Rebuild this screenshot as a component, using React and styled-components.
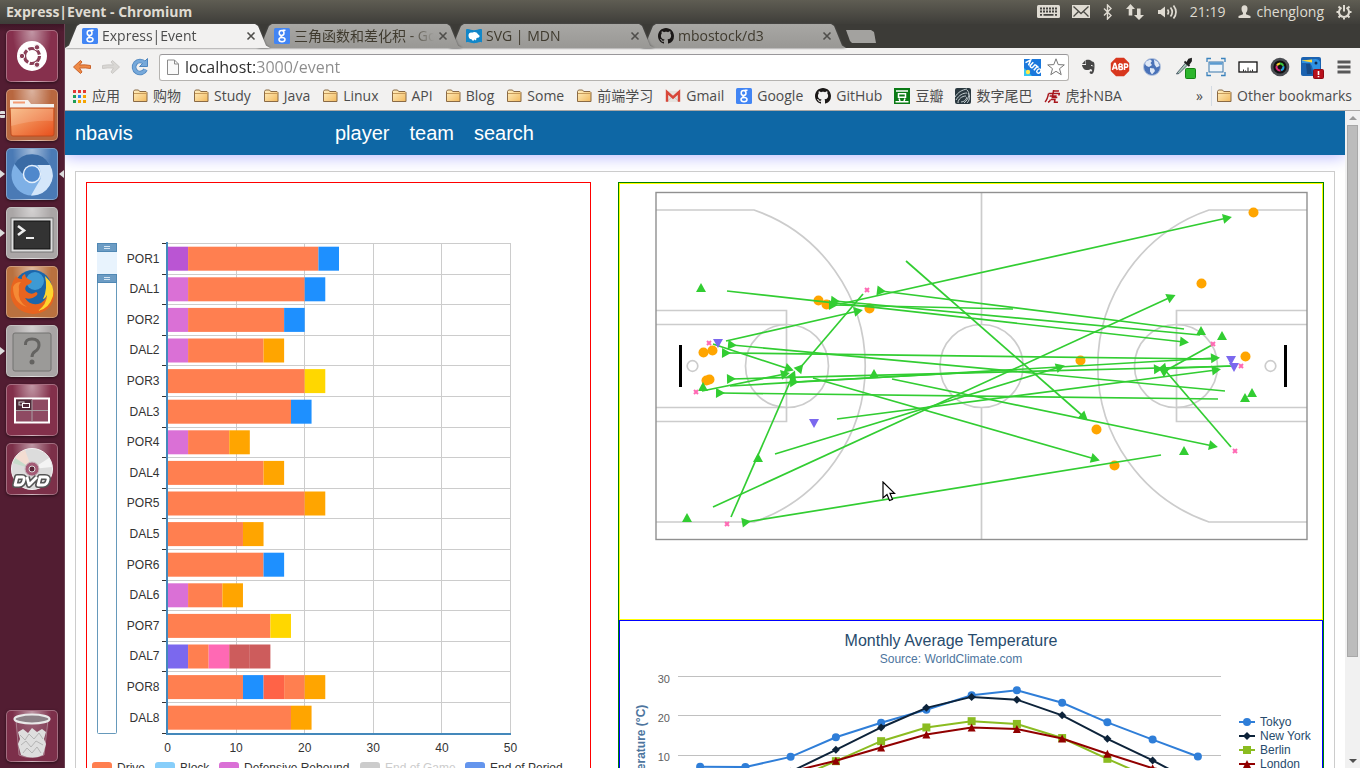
import React from "react";
import styled, { createGlobalStyle, css } from "styled-components";

const UI = `"Open Sans", "Noto Sans CJK SC", sans-serif`;
const WEB = `"Liberation Sans", Arial, "Noto Sans CJK SC", sans-serif`;

const Global = createGlobalStyle`
  *, *::before, *::after { box-sizing: border-box; }
  html, body { margin: 0; height: 100%; overflow: hidden; }
  body { background: #3c3b37; font-family: ${UI}; }
  button { font: inherit; color: inherit; border: 0; background: none; padding: 0; margin: 0; cursor: default; }
  a { color: inherit; text-decoration: none; }
  svg { display: block; flex: none; }
`;

/* ---------- desktop shell ---------- */

const Desktop = styled.div`
  display: flex;
  flex-direction: column;
  height: 100vh;
`;

const TopPanel = styled.header`
  display: flex;
  align-items: center;
  justify-content: space-between;
  flex: none;
  height: 24px;
  padding: 0 8px 0 6px;
  background: linear-gradient(#5f5d53, #3e3d39);
  color: #dfdbd2;
  font-size: 14px;
  line-height: 24px;
`;

const WindowTitle = styled.h1`
  margin: 0;
  font-size: 14px;
  font-weight: 700;
`;

const Indicators = styled.div`
  display: flex;
  align-items: center;
  gap: 12px;
`;

const Indicator = styled.button`
  display: flex;
  align-items: center;
  gap: 6px;
`;

const Workspace = styled.div`
  display: flex;
  flex: 1;
  min-height: 0;
`;

const Launcher = styled.nav`
  display: flex;
  flex-direction: column;
  align-items: center;
  gap: 7px;
  flex: none;
  width: 65px;
  padding: 6px 1px 6px 0;
  background: linear-gradient(#3d1526, #521d32 8px, #521d32);
  border-right: 1px solid #6c4354;
`;

const Tile = styled.button`
  position: relative;
  flex: none;
  width: 52px;
  height: 52px;
  border-radius: 5px;
  border: 1px solid rgba(255, 255, 255, 0.3);
  background: radial-gradient(ellipse at 50% 0, rgba(255, 255, 255, 0.5), rgba(255, 255, 255, 0) 55%), ${(p) => p.$tint};
  box-shadow: 0 1px 3px rgba(0, 0, 0, 0.5);
  ${(p) => p.$last && css`margin-top: auto;`}
  ${(p) =>
    p.$running === "one" &&
    css`
      &::before {
        content: "";
        position: absolute;
        left: -7px;
        top: 21px;
        border: 4px solid transparent;
        border-left: 5px solid #ddd;
        border-right: 0;
      }
    `}
  ${(p) =>
    p.$running === "many" &&
    css`
      &::before {
        content: "";
        position: absolute;
        left: -7px;
        top: 21px;
        width: 5px;
        height: 7px;
        border: 0 solid #ddd;
        border-width: 3px 0;
        border-radius: 1px;
      }
    `}
  ${(p) =>
    p.$focused &&
    css`
      &::after {
        content: "";
        position: absolute;
        right: -7px;
        top: 21px;
        border: 4px solid transparent;
        border-right: 5px solid #ddd;
        border-left: 0;
      }
    `}
`;

const BrowserWindow = styled.main`
  display: flex;
  flex-direction: column;
  flex: 1;
  min-width: 0;
  background: #f2f1f0;
`;

/* ---------- tabs ---------- */

const TabStrip = styled.div`
  display: flex;
  align-items: flex-end;
  flex: none;
  height: 25px;
  background: #3c3b37;
  border-bottom: 1px solid #f2f1f0;
`;

const TabShade = styled.div`
  position: relative;
  z-index: ${(p) => p.$level};
  flex: 0 1 205px;
  min-width: 0;
  & + & { margin-left: -13px; }
  filter: drop-shadow(0 0 1px #555);
`;

const TabBody = styled.div`
  display: flex;
  align-items: center;
  gap: 4px;
  height: 24px;
  padding: 0 14px 0 17px;
  color: ${(p) => (p.$active ? "#4c4c4c" : "#3f3a2e")};
  background: ${(p) => (p.$active ? "#f2f1f0" : "linear-gradient(#a8a7a4, #999895)")};
  clip-path: polygon(0 100%, 4px 90%, 12px 8%, 15px 0, calc(100% - 15px) 0, calc(100% - 12px) 8%, calc(100% - 4px) 90%, 100% 100%);
`;

const TabTitle = styled.button`
  flex: 1;
  min-width: 0;
  overflow: hidden;
  white-space: nowrap;
  text-align: left;
  font-size: 14px;
  line-height: 22px;
  mask-image: linear-gradient(to right, #000 calc(100% - 24px), transparent);
`;

const NewTab = styled.button`
  flex: none;
  width: 30px;
  height: 13px;
  margin: 0 0 5px 0;
  background: #a3a29f;
  clip-path: polygon(0 0, 25px 0, 28px 2px, 100% 100%, 6px 100%, 4px 11px);
`;

/* ---------- toolbar ---------- */

const Toolbar = styled.div`
  display: flex;
  align-items: center;
  flex: none;
  height: 36px;
  padding: 0 4px 0 5px;
`;

const ButtonGroup = styled.div`
  display: flex;
  gap: ${(p) => p.$gap}px;
`;

const IconButton = styled.button`
  display: flex;
  align-items: center;
  justify-content: center;
  width: 24px;
  height: 24px;
`;

const AddressBar = styled.label`
  display: flex;
  align-items: center;
  gap: 5px;
  flex: 1;
  min-width: 0;
  height: 27px;
  margin: 0 7px;
  padding: 0 2px 0 6px;
  background: #fff;
  border: 1px solid #b5b3b0;
  border-top-color: #99979a;
  border-radius: 3px;
`;

const AddressInput = styled.input`
  flex: 1;
  min-width: 0;
  border: 0;
  padding: 0;
  outline: 0;
  font: 16px/24px ${UI};
  color: transparent;
  background: linear-gradient(to right, #2b2b2b 71px, #8c8c8c 71px);
  -webkit-background-clip: text;
  background-clip: text;
`;

const BookmarkBar = styled.nav`
  display: flex;
  align-items: center;
  flex: none;
  height: 26px;
  padding: 0 8px 4px 6px;
  color: #4c4c4c;
  font-size: 14px;
  line-height: 20px;
  border-bottom: 1px solid #aaa8a6;
`;

const BookmarkList = styled.div`
  display: flex;
  gap: 12px;
  flex: 1;
  min-width: 0;
  overflow: hidden;
`;

const Bookmark = styled.a`
  display: flex;
  align-items: center;
  gap: 5px;
  white-space: nowrap;
`;

const Overflow = styled.button`
  padding: 0 8px;
  margin-right: 4px;
  border-right: 1px solid #d3dae2;
`;

/* ---------- page ---------- */

const Viewport = styled.div`
  display: flex;
  flex: 1;
  min-height: 0;
`;

const Page = styled.div`
  flex: 1;
  min-width: 0;
  overflow: hidden;
  background: #fff;
  font-family: ${WEB};
`;

const SiteHeader = styled.header`
  display: flex;
  align-items: center;
  height: 44px;
  padding: 0 10px;
  background: #0e67a5;
  box-shadow: 0 2px 16px #b8b8ff;
  color: #fff;
  font-size: 20px;
  line-height: 24px;
`;

const Brand = styled.a`
  width: 260px;
`;

const SiteNav = styled.nav`
  display: flex;
  gap: 20px;
`;

const Content = styled.section`
  display: grid;
  grid-template-columns: 5fr 7fr;
  gap: 27px;
  margin: 16px 10px 0;
  padding: 10px;
  border: 1px solid #ccc;
`;

const Panel = styled.div`
  border: 1px solid ${(p) => p.$line};
  min-width: 0;
`;

const CourtPanel = styled(Panel)`
  position: relative;
  height: 437px;
`;

const Cursor = styled.svg`
  position: absolute;
  left: 262px;
  top: 297px;
`;

const ScrollTrack = styled.div`
  display: flex;
  flex-direction: column;
  align-items: center;
  flex: none;
  width: 15px;
  background: #f1f1f1;
`;

const ScrollArrow = styled.button`
  display: flex;
  align-items: center;
  justify-content: center;
  width: 15px;
  height: 14px;
`;

const ScrollThumb = styled.div`
  width: 11px;
  flex: 0 0 81%;
  margin-bottom: auto;
  background: #bcbcbc;
  border: 1px solid #a8a8a8;
`;

/* ---------- small icons ---------- */

const GoogleIcon = () => (
  <svg width="16" height="16" viewBox="0 0 16 16">
    <rect width="16" height="16" rx="1.5" fill="#4285f4" />
    <g fill="none" stroke="#fff" strokeWidth="1.5">
      <ellipse cx="7.6" cy="5" rx="2.4" ry="2.5" />
      <path d="M8.5 2.2h3M9 7.3c-2.5.6-2.8 1.4-.8 2.2" />
      <ellipse cx="8" cy="11.6" rx="3" ry="2.1" />
    </g>
  </svg>
);

const MdnIcon = () => (
  <svg width="16" height="16" viewBox="0 0 16 16">
    <path d="M0 1.500c2.500-1.500 5 .8 8 .8s5.500-2.300 8-.8v13c-2.500-1.500-5 .8-8 .8S2.500 13 0 14.500z" fill="#1287c9" />
    <path d="M2.500 7.500c0-2 1.500-3.300 3.500-2.800 2-1.500 5-.7 5.500 1l2.300 2.300-1 1.500-2.300.5-.5 2.500-1.500-1-1.500 1.500-1.500-1.700c-1.800 0-3-1.800-3-3.800z" fill="#fff" />
  </svg>
);

const GitHubIcon = () => (
  <svg width="16" height="16" viewBox="0 0 16 16">
    <path
      fill="#1b1817"
      d="M8 0C3.580 0 0 3.580 0 8c0 3.540 2.290 6.530 5.470 7.590.4.070.55-.170.55-.380 0-.190-.010-.820-.010-1.490-2.010.370-2.530-.490-2.690-.940-.090-.230-.480-.940-.820-1.130-.280-.150-.680-.520-.010-.530.630-.010 1.080.580 1.230.820.720 1.210 1.870.870 2.330.660.070-.520.280-.870.510-1.070-1.780-.2-3.640-.890-3.640-3.950 0-.870.310-1.590.820-2.150-.080-.2-.360-1.020.080-2.120 0 0 .670-.210 2.200.820.640-.180 1.320-.270 2-.270s1.360.090 2 .270c1.530-1.040 2.200-.820 2.200-.820.440 1.100.160 1.920.080 2.120.510.560.820 1.270.820 2.150 0 3.070-1.870 3.750-3.650 3.950.290.250.540.730.540 1.480 0 1.070-.010 1.930-.010 2.200 0 .210.150.460.550.380A8.010 8.010 0 0 0 16 8c0-4.420-3.580-8-8-8z"
    />
  </svg>
);

const FolderIcon = () => (
  <svg width="16" height="16" viewBox="0 0 16 16">
    <defs>
      <linearGradient id="fold" x1="0" y1="0" x2="1" y2="1">
        <stop offset="0" stopColor="#fff0c4" />
        <stop offset="1" stopColor="#f3b95d" />
      </linearGradient>
    </defs>
    <path d="M1.500 13.500v-10l1-1.500h4l1.200 1.500h6.300l1 1v9z" fill="url(#fold)" stroke="#8a6a45" />
    <path d="M2 5.500h13" stroke="#c79a5a" />
  </svg>
);

const AppsIcon = () => (
  <svg width="16" height="16" viewBox="0 0 16 16">
    {["#e53935", "#e53935", "#e53935", "#1e9e57", "#2a86f0", "#f5a400", "#1e9e57", "#f5a400", "#f5a400"].map((c, i) => (
      <rect key={i} x={2 + (i % 3) * 5} y={2 + Math.floor(i / 3) * 5} width="3" height="3" fill={c} />
    ))}
  </svg>
);

const GmailIcon = () => (
  <svg width="16" height="16" viewBox="0 0 16 16">
    <rect x="1" y="3" width="14" height="11" fill="#e6e3df" />
    <path d="M2 13.500L8 8l6 5.500" fill="none" stroke="#c8c4be" />
    <path d="M2 13.800V4l6 5.500L14 4v9.800" fill="none" stroke="#d8473a" strokeWidth="2.400" />
  </svg>
);

const DoubanIcon = () => (
  <svg width="16" height="16" viewBox="0 0 16 16">
    <rect width="16" height="16" fill="#0a7a15" />
    <path d="M2 3h12M4.500 5.800h7v3.400h-7zM5 10.500l1 2.500M11 10.500l-1 2.500M1.500 13.700h13" stroke="#fff" strokeWidth="1.500" fill="none" />
  </svg>
);

const TailIcon = () => (
  <svg width="16" height="16" viewBox="0 0 16 16">
    <rect width="16" height="16" rx="2" fill="#2b3940" />
    <path d="M0 9C3 4 7 2 12 1M1 12C4 7 8 5 12 5M3 15c0-4 4-7 8-7M12 2c3 3 3 8-3 13M13 5c3 4 1 8-1 10M6 14c3 0 5-2 6-5" stroke="#c4ced1" fill="none" />
  </svg>
);

const HupuIcon = () => (
  <svg width="16" height="16" viewBox="0 0 16 16">
    <g transform="translate(2 0) skewX(-10)">
      <path d="M8 2v3M8.500 3h5M3.500 5.500h11l-.5 2M3.500 5.500C3.500 10 3 12 1.500 14M5 8h7M8 6v3.500h5M6.500 11.500q0 2-2 2.800M7 11.500h4v2.800h3.500" stroke="#a8161c" strokeWidth="1.500" fill="none" />
    </g>
  </svg>
);

const CloseIcon = () => (
  <svg width="10" height="10" viewBox="0 0 10 10">
    <path d="M1.500 1.500l7 7M8.500 1.500l-7 7" stroke="#4f4e4b" strokeWidth="1.600" />
  </svg>
);

const ArrowIcon = ({ dir }) => (
  <svg width="20" height="20" viewBox="0 0 20 20">
    {dir === "back" ? (
      <path d="M1.500 10L8.500 3.500 10 5 7.500 8q6-.5 11 .5v3q-5-1-11-.5L10 15l-1.500 1.500z" fill="#ef8a45" stroke="#c9622a" strokeLinejoin="round" />
    ) : (
      <path d="M18.500 10L11.500 3.500 10 5l2.500 3q-6-.5-11 .5v3q5-1 11-.5L10 15l1.500 1.500z" fill="#d9d7d4" stroke="#cbc9c6" strokeLinejoin="round" />
    )}
  </svg>
);

const ReloadIcon = () => (
  <svg width="20" height="20" viewBox="0 0 20 20">
    <path d="M14.500 6A6 6 0 1 0 15.500 12.500" fill="none" stroke="#4f86bf" strokeWidth="4.600" />
    <path d="M17.500 1.500v8h-8z" fill="#77a9da" stroke="#4f86bf" />
    <path d="M14.500 6A6 6 0 1 0 15.500 12.500" fill="none" stroke="#77a9da" strokeWidth="3" />
  </svg>
);

const PageIcon = () => (
  <svg width="14" height="18" viewBox="0 0 14 18">
    <path d="M1.500 2h7l4 4v10.500h-11z" fill="#fafafa" stroke="#8b8b8b" />
    <path d="M8.500 2v4h4" fill="none" stroke="#8b8b8b" />
  </svg>
);

const AutoIcon = () => (
  <svg width="17" height="17" viewBox="0 0 17 17">
    <rect width="17" height="17" fill="#1a78dc" />
    <path d="M0 9l8 8H0z" fill="#38c8f2" />
    <circle cx="4" cy="13" r="2.200" fill="#ffe94a" />
    <g transform="translate(1 -1) rotate(42 8.500 8.500)">
      <path d="M0 11L2 5.500 4 11M5.500 5.500V9.300q0 1.500 1.500 1.500t1.500-1.500V5.500M9.300 6h3.700M11.200 6v5" fill="none" stroke="#fff" strokeWidth="1.500" />
      <ellipse cx="15.500" cy="8.300" rx="1.700" ry="2.300" fill="none" stroke="#fff" strokeWidth="1.400" />
    </g>
  </svg>
);

const StarIcon = () => (
  <svg width="20" height="20" viewBox="0 0 20 20">
    <path d="M10 1.800l2.200 5.800 6.100.3-4.800 3.800 1.700 6L10 14.300l-5.200 3.400 1.700-6L1.700 7.900l6.100-.3z" fill="#fff" stroke="#777" />
  </svg>
);

const EXTENSIONS = [
  ["Evernote", <svg width="18" height="18" viewBox="0 0 18 18"><path d="M3 6l3.500-4v4zM7 2c2-.8 5-.2 6 1.500 2 .3 2.500 1 2.500 4 0 4-.5 8.500-3 8.500-2.500 0-2.500-3 0-3v1c1 0 1-3-1-3-2 2-6 1-7-.5C3.500 9 3 8 3 7h4z" fill="#464646" /><path d="M12 7.500q1.500-.5 1.800.8" stroke="#f2f1f0" fill="none" /></svg>],
  ["AdBlock", <svg width="20" height="20" viewBox="0 0 20 20"><path d="M6 .8h8L19.200 6v8L14 19.200H6L.8 14V6z" fill="#d8371e" /><path d="M2.500 13l2-6.500h.8l1.900 6.500M3.300 11h3M9 7v5.500M9 7h1.700q1.500 0 1.500 1.300T10.700 9.700H9M9 9.700h2q1.500 0 1.500 1.500T11 12.500H9M14.500 13V7h1.500q1.700 0 1.700 1.700T16 10.300h-1.500" fill="none" stroke="#fff" strokeWidth="1.500" /></svg>],
  ["Globe", <svg width="20" height="20" viewBox="0 0 20 20"><circle cx="10" cy="10" r="8.500" fill="#4a72b8" stroke="#b7c6df" /><path d="M4 4.500l4-2 2 1.500-1.500 2L10 8 7 10 4.500 9 3 7zM12 2.500l4 2.500 1.500 4-3 1.500-2-3zM8 11l4 .5 1 2.500-3 3.500-2-3z" fill="#dfe8f6" /></svg>],
  ["Color picker", <svg width="24" height="24" viewBox="0 0 24 24"><path d="M5 18l8.500-10 2 2L7 18.500l-2.500.5z" fill="#a9c6b5" stroke="#345" strokeWidth=".8" /><path d="M12.500 6.500l5 4.500M15 8l2-3.500 2-.5v2L16.500 9.500z" fill="#222" stroke="#222" strokeWidth="1.800" /><rect x="13.500" y="13.500" width="10" height="10" rx="1" fill="#2cb52c" stroke="#158215" /></svg>],
  ["Capture", <svg width="20" height="20" viewBox="0 0 20 20"><path d="M1 5V1.500h4M15 1.500h4V5M1 15v3.500h4M15 18.500h4V15" fill="none" stroke="#3b83bd" strokeWidth="1.300" /><rect x="3" y="5" width="14" height="10" fill="#eef4f9" stroke="#3b79ab" /><path d="M3.500 6.500h13" stroke="#5b9bd0" strokeWidth="2.500" /></svg>],
  ["Ruler", <svg width="20" height="20" viewBox="0 0 20 20"><rect x="1" y="5" width="18" height="10" fill="#fff" stroke="#111" strokeWidth="1.300" /><path d="M5.500 14.500v-2M10 14.500v-4M14.500 14.500v-2M7.500 14.500v-1M12.500 14.500v-1" stroke="#222" /></svg>],
  ["Camera", <svg width="20" height="20" viewBox="0 0 20 20"><circle cx="10" cy="10" r="9.300" fill="#4a4d52" /><circle cx="10" cy="10" r="6.600" fill="#111" /><g fill="none" strokeWidth="2"><path d="M7 8.500A3.500 3.500 0 0 1 10 6.500" stroke="#f4d12b" /><path d="M10 6.500a3.500 3.500 0 0 1 3.200 2.300" stroke="#3cc43a" /><path d="M13.300 9.200A3.500 3.500 0 0 1 11 13.300" stroke="#26a6e0" /><path d="M10.500 13.500A3.500 3.500 0 0 1 6.800 8.700" stroke="#d92c7c" /></g></svg>],
  ["Bird", <svg width="24" height="24" viewBox="0 0 24 24"><rect x="1" y="2" width="20" height="19" rx="2" fill="#1b62b0" /><path d="M2 5h8q8-3 10 2v12q-5 1-7-4-1-5-3-7H2z" fill="#2f93e4" /><path d="M1 5.500l11-1v3z" fill="#ffd83d" /><path d="M6 9h4l2 10H7z" fill="#174a86" /><circle cx="16" cy="8" r="1.500" fill="#0d2d55" /><rect x="13.500" y="14.500" width="10" height="9" rx="1" fill="#b8101c" stroke="#8e0a14" /><path d="M18.500 16v4M18.500 21v1.300" stroke="#fff" strokeWidth="1.600" /></svg>],
  ["Menu", <svg width="16" height="16" viewBox="0 0 16 16"><path d="M1.500 3h13M1.500 8h13M1.500 13h13" stroke="#585858" strokeWidth="3" /></svg>],
];

const PANEL_ICONS = [
  ["Keyboard", <svg width="23" height="14" viewBox="0 0 23 14"><rect width="23" height="13" rx="1.500" fill="#dfdbd2" /><path d="M3 3.500h17M3 6.500h17" stroke="#454440" strokeWidth="2" strokeDasharray="2 1" /><path d="M3 9.800h2M6.500 9.800h10M18 9.800h2" stroke="#454440" strokeWidth="1.800" /></svg>],
  ["Mail", <svg width="19" height="14" viewBox="0 0 19 14"><rect width="18" height="13" fill="#dfdbd2" /><path d="M1.500 1.500L9 8.500l7.500-7M1.500 11.500l5-5M16.500 11.500l-5-5" fill="none" stroke="#4a4944" strokeWidth="1.300" /></svg>],
  ["Bluetooth", <svg width="10" height="16" viewBox="0 0 10 16"><path d="M1 4.500l7 7-3.500 3.500V1L8 4.500l-7 7" fill="none" stroke="#dfdbd2" strokeWidth="1.400" /></svg>],
  ["Network", <svg width="20" height="18" viewBox="0 0 20 18"><path d="M5.500 1L10 6H7.300v6.500H3.700V6H1zM14 17l-5-5h3V5.500h3.600V12H19z" fill="#dfdbd2" /></svg>],
  ["Volume", <svg width="21" height="16" viewBox="0 0 21 16"><path d="M1 6h2.500L8 2.500v11L3.500 10H1z" fill="#dfdbd2" /><path d="M10.500 5.500q2 2.500 0 5M13.500 3.500q3.500 4.500 0 9M16.500 1.500q5 6.500 0 13" fill="none" stroke="#dfdbd2" strokeWidth="1.700" /></svg>],
];

/* ---------- launcher icons ---------- */

const L = (props) => <svg width="50" height="50" viewBox="0 0 50 50" {...props} />;

const LAUNCHER = [
  { name: "Dash", tint: "#86304d", icon: (
    <L><circle cx="25" cy="25" r="15" fill="#fff" /><circle cx="25" cy="25" r="7.500" fill="none" stroke="#8a4058" strokeWidth="3.200" strokeDasharray="14 1.700" />
      {[[15, 25], [30, 16.300], [30, 33.700]].map(([x, y]) => <circle key={`${x}${y}`} cx={x} cy={y} r="2.700" fill="#8a4058" stroke="#fff" />)}</L>) },
  { name: "Files", tint: "#b8673f", running: "many", icon: (
    <L><defs><linearGradient id="files" x1="0" y1="0" x2="1" y2="1"><stop offset="0" stopColor="#f8b77c" /><stop offset="1" stopColor="#e84f1c" /></linearGradient></defs>
      <path d="M3 17V10h18l3 4h23v6H3z" fill="#f6f2ee" /><path d="M6 12.500h12" stroke="#f39b72" strokeWidth="2" /><path d="M3 18h44v26q0 2-2 2H6q-2 0-2-2z" fill="url(#files)" stroke="#c04a1d" /><path d="M4 19h42v12Q25 30 4 36z" fill="#fff" opacity=".15" /></L>) },
  { name: "Chromium", tint: "#4a7ab5", running: "one", focused: true, icon: (
    <L><circle cx="25" cy="26" r="20.500" fill="#7eb0e6" /><path d="M7.500 15A20.500 20.500 0 0 1 43 16H25q-8 2-9.500 9z" fill="#3a6ba5" /><path d="M43 16A20.500 20.500 0 0 1 24 46.500L33.500 30q2-7-3-14z" fill="#d4e6fa" /><circle cx="25" cy="25" r="9.200" fill="#e6f0fb" /><circle cx="25" cy="25" r="7.800" fill="#4f88cc" /></L>) },
  { name: "Terminal", tint: "#aaa6a6", running: "one", icon: (
    <L><rect x="4" y="10" width="42" height="34" fill="#dedede" stroke="#777" /><rect x="7" y="13" width="36" height="28" fill="#333" stroke="#111" /><path d="M11 18l6 4.500-6 4.500" fill="none" stroke="#eee" strokeWidth="2.600" /><path d="M19 30h8" stroke="#eee" strokeWidth="2" /></L>) },
  { name: "Firefox", tint: "#b9713f", icon: (
    <L><circle cx="26" cy="22" r="19" fill="#1b66ab" /><circle cx="28" cy="14" r="9" fill="#4cb0e6" opacity=".7" />
      <path d="M9 9q2 3 6 3-1-3 3-5 0 3 3 5l4 2q-1 3-5 4-3 3-1 6 5 5 10 1 3 1 0 4-5 4-11 2 6 9 16 5 8-5 8-17 6 4 5 12-4 15-21 16Q8 45 4 30q-2-11 5-21z" fill="#e8641f" />
      <path d="M6 20q2-5 8-5-3 3-2 7-2 12 8 18Q6 36 6 20z" fill="#f58a35" />
      <path d="M38 9q10 9 8 20-4 13-15 15 9-7 9-16-2 4-4 4 5-10 2-23z" fill="#ffd52e" /></L>) },
  { name: "Help", tint: "#a9a5a5", running: "one", icon: (
    <L><rect x="6" y="7" width="38" height="38" rx="2" fill="#9b9a98" stroke="#737270" /><path d="M18.500 19q-.5-6 6.500-6t7 6q0 4-4 6.500-3 2-3 5.500" fill="none" stroke="#646361" strokeWidth="3" /><circle cx="25" cy="36" r="2.500" fill="#646361" /></L>) },
  { name: "Workspaces", tint: "#83304b", icon: (
    <L><rect x="8" y="13.500" width="34" height="24" fill="#8e4a62" stroke="#fff" strokeWidth="2" /><rect x="9" y="14.500" width="16" height="11" fill="#4e2a38" /><path d="M25 15v22M9 25.500h32" stroke="#a9a0a4" /><rect x="12" y="17" width="5" height="3" fill="none" stroke="#ccc" /><rect x="15.500" y="18.500" width="7" height="4" fill="#4e2a38" stroke="#fff" /></L>) },
  { name: "DVD", tint: "#7c3049", icon: (
    <L><circle cx="25" cy="25" r="20.500" fill="#dcdcdc" stroke="#f4f4f4" /><path d="M25 25L8 14a20 20 0 0 1 10-8z" fill="#f3ddd2" /><path d="M25 25L6 19l2-5z" fill="#c7dccb" /><path d="M25 25l17-11a20 20 0 0 1 3 9z" fill="#f4f4f4" /><circle cx="25" cy="25" r="7" fill="#a35a75" stroke="#c9b9bf" /><circle cx="25" cy="25" r="3" fill="#5b2438" stroke="#ddd" />
      <g fill="none" strokeLinejoin="round"><path d="M8 41l2-8h5q3 0 2 3-1 5-5 5zM20 33l2 8 8-8M31 41l2-8h5q4 0 3 3-1 5-5 5z" stroke="#555" strokeWidth="6" /><path d="M8 41l2-8h5q3 0 2 3-1 5-5 5zM20 33l2 8 8-8M31 41l2-8h5q4 0 3 3-1 5-5 5z" stroke="#fff" strokeWidth="2.800" /></g></L>) },
  { name: "Trash", tint: "#7c2f4a", last: true, icon: (
    <L><path d="M9 9l3 35q12 5 25 0l4-35z" fill="#8a4a62" opacity=".6" stroke="#c3a9b3" /><path d="M11 21l5-3 5 4 4-5 5 4 5-3 4 3-2 7 2 5-3 11q-10 5-22 0l-3-11 2-5z" fill="#dedede" /><path d="M13 24l5 5 4-6 5 5 5-6 4 6M14 34l5-4 5 6 5-6 7 4M16 42l4-5 5 5 5-6 4 6" fill="none" stroke="#b4b4b4" /><ellipse cx="25" cy="8" rx="17.500" ry="4.500" fill="#8c8187" stroke="#e9e9e9" strokeWidth="2.200" /></L>) },
];

/* ---------- stacked bar chart ---------- */

const C = { coral: "#ff7f50", orchid: "#da70d6", violet: "#ba55d3", blue: "#1e90ff", orange: "#ffa500", gold: "#ffd700", slate: "#7b68ee", pink: "#ff69b4", indian: "#cd5c5c", tomato: "#ff6347" };

const ROWS = [
  ["POR1", [[3, "violet"], [19, "coral"], [3, "blue"]]],
  ["DAL1", [[3, "orchid"], [17, "coral"], [3, "blue"]]],
  ["POR2", [[3, "orchid"], [14, "coral"], [3, "blue"]]],
  ["DAL2", [[3, "orchid"], [11, "coral"], [3, "orange"]]],
  ["POR3", [[20, "coral"], [3, "gold"]]],
  ["DAL3", [[18, "coral"], [3, "blue"]]],
  ["POR4", [[3, "orchid"], [6, "coral"], [3, "orange"]]],
  ["DAL4", [[14, "coral"], [3, "orange"]]],
  ["POR5", [[20, "coral"], [3, "orange"]]],
  ["DAL5", [[11, "coral"], [3, "orange"]]],
  ["POR6", [[14, "coral"], [3, "blue"]]],
  ["DAL6", [[3, "orchid"], [5, "coral"], [3, "orange"]]],
  ["POR7", [[15, "coral"], [3, "gold"]]],
  ["DAL7", [[3, "slate"], [3, "coral"], [3, "pink"], [3, "indian"], [3, "indian"]]],
  ["POR8", [[11, "coral"], [3, "blue"], [3, "tomato"], [3, "coral"], [3, "orange"]]],
  ["DAL8", [[18, "coral"], [3, "orange"]]],
];

const BAR_LEGEND = [
  [5, "Drive", "#ff7f50", "#333"],
  [68, "Block", "#87cefa", "#333"],
  [132, "Defensive Rebound", "#da70d6", "#333"],
  [273, "End of Game", "#ccc", "#ccc"],
  [378, "End of Period", "#6495ed", "#333"],
];

const ChartSvg = styled.svg`
  font-family: ${WEB};
  font-size: 12px;
`;

const BarChart = () => {
  const x0 = 80;
  const y0 = 60;
  const unit = 6.86;
  const band = 30.6;
  const bottom = 550;
  const snap = (v) => Math.round(v) + 0.5;
  return (
    <ChartSvg width="503" height="620" fill="#333">
      {[10, 20, 30, 40, 50].map((v) => (
        <path key={v} d={`M${snap(x0 + v * unit)} ${y0}V${bottom}`} stroke="#ccc" />
      ))}
      {ROWS.map(([name], i) => (
        <g key={name}>
          <path d={`M${x0} ${snap(y0 + i * band)}H424`} stroke="#ccc" />
          <path d={`M75 ${snap(y0 + i * band)}H${x0}`} stroke="#333" />
        </g>
      ))}
      {ROWS.map(([name, parts], i) => {
        let at = 0;
        return (
          <g key={name}>
            {parts.map(([v, c], j) => {
              const x = x0 + 0.5 + at * unit;
              at += v;
              return <rect key={j} x={x} y={y0 + i * band + 3.7} width={v * unit} height="24" fill={C[c]} />;
            })}
            <text x="72.5" y={Math.floor(y0 + i * band + 20)} textAnchor="end">{name}</text>
          </g>
        );
      })}
      <path d={`M75 ${bottom + 0.5}H${x0}`} stroke="#333" />
      <path d={`M${x0} ${y0 - 1}V${bottom + 1}M${x0 - 1} ${bottom + 1}H424`} stroke="#4488bb" strokeWidth="2" fill="none" />
      {[0, 10, 20, 30, 40, 50].map((v) => (
        <text key={v} x={x0 + 0.5 + v * unit} y="569" textAnchor="middle">{v}</text>
      ))}
      <rect x="10.5" y="60.5" width="19" height="490" rx="1" fill="#fff" stroke="#6699bb" />
      <rect x="10" y="69" width="20" height="22" fill="#e8f3fd" />
      {[60, 91].map((y) => (
        <g key={y}>
          <rect x="10.5" y={y + 0.5} width="19" height="8" fill="#6c9cc4" stroke="#5088b4" />
          <path d={`M17 ${y + 3.5}h6M17 ${y + 5.5}h6`} stroke="#d6e6f3" />
        </g>
      ))}
      {BAR_LEGEND.map(([x, label, fill, ink]) => (
        <g key={label}>
          <rect x={x} y="579" width="20" height="14" rx="3" fill={fill} />
          <text x={x + 25} y="589" fill={ink}>{label}</text>
        </g>
      ))}
    </ChartSvg>
  );
};

/* ---------- court ---------- */

const PASSES = [
  [250, 69, 428, 225], [71, 99, 528, 150], [184, 112, 571, 26], [70, 149, 202, 119],
  [57, 152, 133, 177], [207, 102, 144, 176], [528, 137, 225, 99], [544, 143, 179, 109],
  [357, 117, 177, 113], [569, 199, 76, 153], [557, 167, 70, 161], [74, 194, 559, 166],
  [581, 174, 75, 187], [324, 180, 138, 190], [562, 207, 64, 201], [181, 227, 560, 178],
  [119, 262, 404, 175], [57, 315, 515, 105], [75, 325, 137, 183], [157, 186, 439, 267],
  [236, 187, 557, 254], [505, 263, 90, 330], [46, 199, 129, 182], [556, 153, 509, 179],
  [575, 255, 508, 177], [574, 174, 502, 177],
];
const SHOTS = [[162, 108], [170, 112], [213, 116], [47, 160], [56, 158], [50, 188], [53, 187], [597, 20], [545, 91], [424, 168], [589, 164], [440, 237], [458, 273]];
const REBOUNDS = [[45, 96], [47, 195], [102, 266], [31, 326], [218, 182], [545, 139], [566, 144], [596, 201], [589, 206], [528, 259]];
const TURNOVERS = [[62, 151], [158, 231], [575, 168], [578, 175]];
const MISSES = [[53, 151], [211, 98], [40, 200], [71, 332], [557, 152], [585, 174], [579, 259]];

const HalfCourt = () => (
  <>
    <path d="M0 18H98A165 165 0 0 1 98 330H0" />
    <path d="M0 118.500H130.500V229.500H0M0 132.500H130.500M0 215.500H130.500" />
    <circle cx="131" cy="174" r="41.500" />
    <circle cx="36.500" cy="174" r="5.300" />
  </>
);

const Court = () => (
  <svg width="700" height="400">
    <g transform="translate(36 8)">
      <g fill="none" stroke="#ccc" strokeWidth="1.700">
        <HalfCourt />
        <g transform="translate(651 0) scale(-1 1)"><HalfCourt /></g>
        <circle cx="325.500" cy="174" r="41.500" />
        <path d="M325.500 1V132M325.500 216V347" />
      </g>
      <rect x="0" y="0.500" width="651" height="347" fill="none" stroke="#909090" strokeWidth="1.400" />
      <path d="M24.500 153V195M629.500 153V195" stroke="#000" strokeWidth="3" />
      {SHOTS.map(([x, y]) => <circle key={`${x}-${y}`} cx={x + 0.5} cy={y + 0.5} r="5" fill="#ffa500" />)}
      <g fill="#32cd32">
        {REBOUNDS.map(([x, y]) => <path key={`${x}-${y}`} d={`M${x} ${y - 5}l5 9h-10z`} />)}
        {PASSES.map(([x1, y1, x2, y2]) => {
          const turn = (Math.atan((y2 - y1) / (x2 - x1)) * 180) / Math.PI;
          return (
            <g key={`${x1}-${y1}`}>
              <path d={`M${x1} ${y1}L${x2} ${y2}`} stroke="#32cd32" strokeWidth="1.700" />
              <path d="M-4 -5L5 0L-4 5z" transform={`translate(${x2} ${y2}) rotate(${turn})`} />
            </g>
          );
        })}
      </g>
      {TURNOVERS.map(([x, y]) => <path key={`${x}-${y}`} d={`M${x} ${y + 5}l-5 -9h10z`} fill="#7b68ee" />)}
      {MISSES.map(([x, y]) => <path key={`${x}-${y}`} d={`M${x - 2} ${y - 2}l4 4m0 -4l-4 4`} stroke="#ff69b4" strokeWidth="2" />)}
    </g>
  </svg>
);

/* ---------- temperature chart ---------- */

const SERIES = [
  ["Tokyo", "#2f7ed8", "circle", [7, 6.9, 9.5, 14.5, 18.2, 21.5, 25.2, 26.5, 23.3, 18.3, 13.9, 9.6]],
  ["New York", "#0d233a", "diamond", [-0.2, 0.8, 5.7, 11.3, 17, 22, 24.8, 24.1, 20.1, 14.1, 8.6, 2.5]],
  ["Berlin", "#8bbc21", "square", [-0.9, 0.6, 3.5, 8.4, 13.5, 17, 18.6, 17.9, 14.3, 9, 3.9, 1]],
  ["London", "#910000", "triangle", [3.9, 4.2, 5.7, 8.5, 11.9, 15.2, 17, 16.6, 14.2, 10.3, 6.6, 4.8]],
];

const MARKS = {
  circle: "M-4 0a4 4 0 1 0 8 0a4 4 0 1 0 -8 0",
  diamond: "M0 -4L4 0L0 4L-4 0z",
  square: "M-4 -4h8v8h-8z",
  triangle: "M0 -4L4 4H-4z",
};

const LineChart = () => {
  const px = (i) => 57.5 + 45.25 * (i + 0.5);
  const py = (v) => 55.5 + (30 - v) * 3.92;
  return (
    <ChartSvg width="702" height="300">
      <text x="331" y="25" textAnchor="middle" fontSize="16" fill="#274b6d">Monthly Average Temperature</text>
      <text x="331" y="42" textAnchor="middle" fill="#4d759e">Source: WorldClimate.com</text>
      {[30, 20, 10, 0, -10].map((v) => (
        <g key={v}>
          <path d={`M58 ${Math.round(py(v) - 0.4) + 0.5}H601`} stroke="#c0c0c0" />
          <text x="50" y={62 + (30 - v) * 3.9} textAnchor="end" fontSize="11" fill="#606060">{v}</text>
        </g>
      ))}
      <text transform="translate(25 132) rotate(-90)" textAnchor="middle" fontWeight="700" fill="#4d759e">Temperature (°C)</text>
      {SERIES.map(([name, color, mark, data], s) => (
        <g key={name} fill={color}>
          <polyline points={data.map((v, i) => `${px(i)},${py(v)}`).join(" ")} fill="none" stroke={color} strokeWidth="2" />
          {data.map((v, i) => <path key={i} d={MARKS[mark]} transform={`translate(${px(i)} ${py(v)})`} />)}
          <path d={`M619 ${101 + s * 14}h16`} stroke={color} strokeWidth="2" />
          <path d={MARKS[mark]} transform={`translate(627 ${101 + s * 14})`} />
          <text x="640" y={105 + s * 14} fill="#274b6d">{name}</text>
        </g>
      ))}
    </ChartSvg>
  );
};

/* ---------- data for browser chrome ---------- */

const TABS = [
  ["Express|Event", GoogleIcon, true],
  ["三角函数和差化积 - Go", GoogleIcon],
  ["SVG | MDN", MdnIcon],
  ["mbostock/d3", GitHubIcon],
];

const BOOKMARKS = [
  ["应用", AppsIcon], ["购物", FolderIcon], ["Study", FolderIcon], ["Java", FolderIcon], ["Linux", FolderIcon],
  ["API", FolderIcon], ["Blog", FolderIcon], ["Some", FolderIcon], ["前端学习", FolderIcon], ["Gmail", GmailIcon],
  ["Google", GoogleIcon], ["GitHub", GitHubIcon], ["豆瓣", DoubanIcon], ["数字尾巴", TailIcon], ["虎扑NBA", HupuIcon],
];

export default function App() {
  return (
    <Desktop>
      <Global />
      <TopPanel>
        <WindowTitle>Express|Event - Chromium</WindowTitle>
        <Indicators>
          {PANEL_ICONS.map(([name, icon]) => <Indicator key={name} aria-label={name}>{icon}</Indicator>)}
          <Indicator>21:19</Indicator>
          <Indicator>
            <svg width="13" height="14" viewBox="0 0 13 14"><path d="M3.500 4q0-3.700 3-3.700t3 3.700q0 2.500-1.500 4v1.200l4.500 1.800V13H.5v-2L5 9.200V8Q3.500 6.500 3.500 4z" fill="#dfdbd2" /></svg>
            chenglong
          </Indicator>
          <Indicator aria-label="Session">
            <svg width="16" height="16" viewBox="0 0 16 16"><g fill="none" stroke="#dfdbd2" strokeWidth="2"><path d="M5.500 3.700A5 5 0 1 0 10.500 3.700M8 1v6.500M.5 8h2.500M13 8h2.500M2.500 2.500l2 2M13.500 2.500l-2 2M2.500 13.500l2-2M13.500 13.500l-2-2M8 13v2.500" /></g></svg>
          </Indicator>
        </Indicators>
      </TopPanel>
      <Workspace>
        <Launcher>
          {LAUNCHER.map((l) => (
            <Tile key={l.name} aria-label={l.name} $tint={l.tint} $running={l.running} $focused={l.focused} $last={l.last}>{l.icon}</Tile>
          ))}
        </Launcher>
        <BrowserWindow>
          <TabStrip>
            {TABS.map(([title, Icon, active], i) => (
              <TabShade key={title} $level={TABS.length - i}>
                <TabBody $active={active}>
                  <Icon />
                  <TabTitle>{title}</TabTitle>
                  <button aria-label="Close tab"><CloseIcon /></button>
                </TabBody>
              </TabShade>
            ))}
            <NewTab aria-label="New tab" />
          </TabStrip>
          <Toolbar>
            <ButtonGroup $gap={5}>
              <IconButton aria-label="Back"><ArrowIcon dir="back" /></IconButton>
              <IconButton aria-label="Forward"><ArrowIcon dir="forward" /></IconButton>
              <IconButton aria-label="Reload"><ReloadIcon /></IconButton>
            </ButtonGroup>
            <AddressBar>
              <PageIcon />
              <AddressInput aria-label="Address" defaultValue="localhost:3000/event" />
              <AutoIcon />
              <StarIcon />
            </AddressBar>
            <ButtonGroup $gap={8}>
              {EXTENSIONS.map(([name, icon]) => <IconButton key={name} aria-label={name}>{icon}</IconButton>)}
            </ButtonGroup>
          </Toolbar>
          <BookmarkBar>
            <BookmarkList>
              {BOOKMARKS.map(([label, Icon]) => <Bookmark key={label} href="#"><Icon />{label}</Bookmark>)}
            </BookmarkList>
            <Overflow>»</Overflow>
            <Bookmark href="#"><FolderIcon />Other bookmarks</Bookmark>
          </BookmarkBar>
          <Viewport>
            <Page>
              <SiteHeader>
                <Brand href="#">nbavis</Brand>
                <SiteNav>
                  <a href="#">player</a>
                  <a href="#">team</a>
                  <a href="#">search</a>
                </SiteNav>
              </SiteHeader>
              <Content>
                <Panel $line="red"><BarChart /></Panel>
                <Panel $line="green">
                  <CourtPanel $line="yellow">
                    <Court />
                    <Cursor width="14" height="21" viewBox="0 0 14 21">
                      <path d="M1 1v16l4-3.500 2.500 6 3-1.200-2.500-6H12.500z" fill="#fff" stroke="#000" strokeWidth="1.200" />
                    </Cursor>
                  </CourtPanel>
                  <Panel $line="blue"><LineChart /></Panel>
                </Panel>
              </Content>
            </Page>
            <ScrollTrack>
              <ScrollArrow aria-label="Scroll up"><svg width="8" height="4"><path d="M0 4l4-4 4 4z" fill="#9a9a9a" /></svg></ScrollArrow>
              <ScrollThumb />
              <ScrollArrow aria-label="Scroll down"><svg width="8" height="4"><path d="M0 0l4 4 4-4z" fill="#505050" /></svg></ScrollArrow>
            </ScrollTrack>
          </Viewport>
        </BrowserWindow>
      </Workspace>
    </Desktop>
  );
}
